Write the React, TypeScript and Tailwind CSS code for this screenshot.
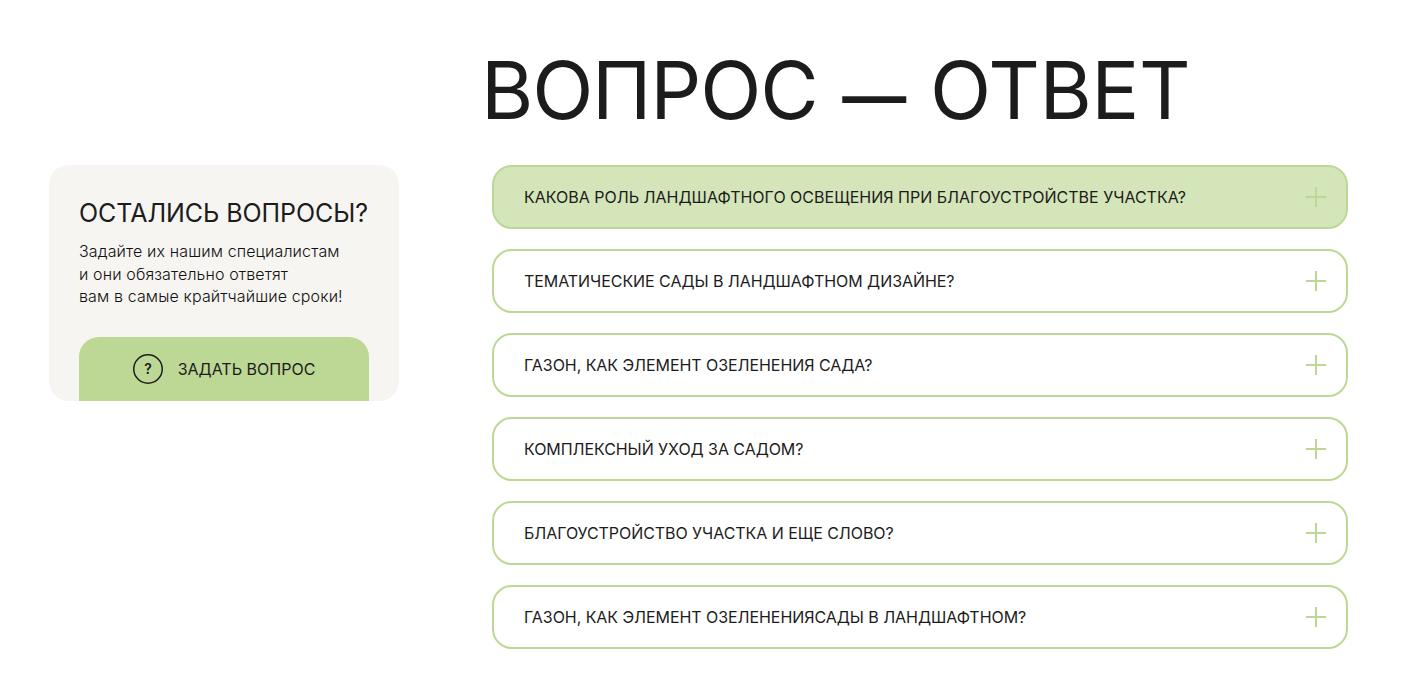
const questions = [
  "Какова роль ландшафтного освещения при благоустройстве участка?",
  "Тематические сады в ландшафтном дизайне?",
  "Газон, как элемент озеленения сада?",
  "Комплексный уход за садом?",
  "Благоустройство участка и еще слово?",
  "Газон, как элемент озелененияСады в ландшафтном?",
];

function Plus() {
  return (
    <svg width="20" height="20" viewBox="0 0 20 20" className="shrink-0 text-[#bdd895]">
      <path d="M10 0v20M0 10h20" stroke="currentColor" strokeWidth="2" fill="none" />
    </svg>
  );
}

function QuestionIcon() {
  return (
    <svg width="30" height="30" viewBox="0 0 30 30" className="shrink-0">
      <circle cx="15" cy="15" r="14.25" stroke="#1c1c1c" strokeWidth="1.5" fill="none" />
      <text x="15" y="20" textAnchor="middle" fontSize="14" fontWeight="600" fill="#1c1c1c">
        ?
      </text>
    </svg>
  );
}

export default function App() {
  return (
    <div className="h-[699px] w-[1401px] overflow-hidden bg-white pl-[49px] font-['Inter',sans-serif] text-[#1c1c1c]">
      <div className="flex">
        {/* Left */}
        <div className="mt-[165px] mr-[93px] flex h-[236px] w-[350px] flex-col rounded-[20px] bg-[#f6f5f1] px-[30px] pt-[30px]">
          <h3 className="text-[25px] leading-[36px] font-normal tracking-[-0.06px] whitespace-nowrap">ОСТАЛИСЬ ВОПРОСЫ?</h3>
          <p className="mt-[9px] text-[16px] leading-[22.5px] font-light tracking-[0.13px] whitespace-nowrap text-[#111]">
            Задайте их нашим специалистам
            <br />и они обязательно ответят
            <br />вам в самые крайтчайшие сроки!
          </p>
          <button className="mt-auto flex h-[64px] w-[290px] items-center justify-center gap-[15px] rounded-t-[20px] bg-[#bdd895] text-[16px] font-normal">
            <QuestionIcon />
            ЗАДАТЬ ВОПРОС
          </button>
        </div>

        {/* Right */}
        <div className="w-[856px]">
          <h1 className="-ml-[11px] h-[165px] pt-[41px] text-[80px] leading-[97px] font-normal tracking-[-1.2px] whitespace-nowrap">
            ВОПРОС <span className="mx-[3.5px] text-[64px] font-semibold">—</span> <span className="tracking-[-0.45px]">ОТВЕТ</span>
          </h1>
          <div className="flex flex-col gap-[20px]">
            {questions.map((q, i) => (
              <div
                key={i}
                className={
                  i === 0
                    ? "flex h-[64px] items-center justify-between rounded-[20px] border-2 border-[#bdd895] bg-[#d4e5b9] pr-[20px] pl-[30px]"
                    : "flex h-[64px] items-center justify-between rounded-[20px] border-2 border-[#bdd895] bg-white pr-[20px] pl-[30px]"
                }
              >
                <span className={i === 0 ? "text-[16px] leading-[24px] font-normal uppercase" : "text-[16px] leading-[24px] font-normal tracking-[-0.06px] uppercase"}>{q}</span>
                <Plus />
              </div>
            ))}
          </div>
        </div>
      </div>
    </div>
  );
}
